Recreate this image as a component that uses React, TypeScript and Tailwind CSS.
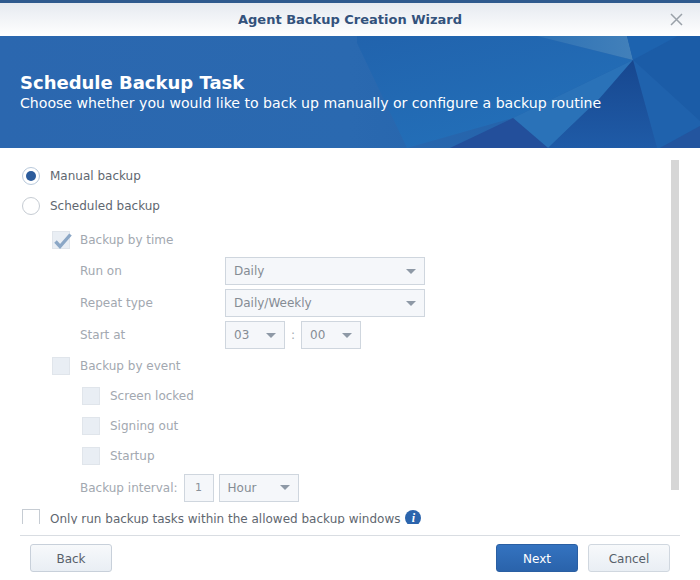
import React from "react";

const F = { fontFamily: '"DejaVu Sans", Verdana, sans-serif' };

function Arrow() {
  return <span className="w-0 h-0 border-x-[5px] border-x-transparent border-t-[5px] border-t-[#8e99a6]" />;
}

function Select({ value, w }: { value: string; w: string }) {
  return (
    <div className={`${w} h-[28px] border border-[#cfd6de] bg-[#f5f7fa] flex items-center justify-between pl-[8px] pr-[8px] text-[12px] text-[#858c94]`}>
      <span>{value}</span>
      <Arrow />
    </div>
  );
}

function Box({ checked }: { checked?: boolean }) {
  return (
    <span className="relative w-[18px] h-[18px] shrink-0 bg-[#e9eef4] border border-[#e0e5eb] block">
      {checked && (
        <svg className="absolute left-0 top-0 overflow-visible" width="18" height="18" viewBox="0 0 18 18">
          <path d="M2.5 9.5 L7 14.5 L17.5 2.5" fill="none" stroke="#8ba7c6" strokeWidth="3.4" />
        </svg>
      )}
    </span>
  );
}

function CheckRow({ label, indent, checked }: { label: string; indent: string; checked?: boolean }) {
  return (
    <div className={`h-[30px] flex items-center gap-[10px] ${indent} text-[12px] text-[#a2a8b0]`}>
      <Box checked={checked} />
      <span>{label}</span>
    </div>
  );
}

function Radio({ on, label }: { on?: boolean; label: string }) {
  return (
    <div className="h-[30px] flex items-center gap-[10px] pl-[2px] text-[12px] text-[#5f6770]">
      <span className={`w-[18px] h-[18px] rounded-full border flex items-center justify-center bg-white ${on ? "border-[#b9c9db]" : "border-[#c6ccd3]"}`}>
        {on && <span className="w-[10px] h-[10px] rounded-full bg-[#2c5c9c]" />}
      </span>
      <span>{label}</span>
    </div>
  );
}

function FieldRow({ label, children }: { label: string; children: React.ReactNode }) {
  return (
    <div className="h-[32px] flex items-center pl-[60px] text-[12px] text-[#a2a8b0]">
      <span className="w-[145px]">{label}</span>
      {children}
    </div>
  );
}

function Banner() {
  return (
    <div className="relative h-[112px] bg-[#2b67af] text-white overflow-hidden">
      <svg className="absolute inset-0" width="700" height="112" viewBox="0 0 700 112">
        <defs>
          <linearGradient id="g" x1="0" y1="0" x2="1" y2="0">
            <stop offset="0" stopColor="#2b67af" />
            <stop offset="0.5" stopColor="#2a69b0" />
            <stop offset="1" stopColor="#1f5da6" />
          </linearGradient>
          <linearGradient id="d" x1="0" y1="0" x2="0" y2="1">
            <stop offset="0" stopColor="#17478f" />
            <stop offset="1" stopColor="#1f5ba7" />
          </linearGradient>
          <linearGradient id="m" x1="0" y1="0" x2="0.6" y2="1">
            <stop offset="0" stopColor="#2163ad" />
            <stop offset="1" stopColor="#2370b9" />
          </linearGradient>
          <linearGradient id="l" x1="0" y1="0" x2="1" y2="0">
            <stop offset="0" stopColor="#2e72b5" />
            <stop offset="1" stopColor="#4280ba" />
          </linearGradient>
        </defs>
        <rect width="700" height="112" fill="url(#g)" />
        <polygon points="357,7 357,0 537,0 633,24 513,82 407,112" fill="url(#m)" />
        <polygon points="537,0 627,0 633,24" fill="url(#l)" />
        <polygon points="627,0 678,0 633,24" fill="#1d63af" />
        <polygon points="633,24 678,0 700,0 700,85" fill="#1b5ca7" />
        <polygon points="633,24 700,85 700,90 660,112 657,112" fill="#1f62ad" />
        <polygon points="513,82 633,24 600,62 548,112" fill="#2a72b8" />
        <polygon points="633,24 600,62 548,112 657,112" fill="url(#d)" />
        <polygon points="513,82 548,112 450,112" fill="#234f9b" />
        <polygon points="700,90 700,112 660,112" fill="#23559f" />
      </svg>
      <div className="relative pt-[36px] pl-[20px]">
        <div className="text-[18px] font-bold leading-[22px]">Schedule Backup Task</div>
        <div className="text-[14.1px] leading-[19px]">Choose whether you would like to back up manually or configure a backup routine</div>
      </div>
    </div>
  );
}

export default function App() {
  return (
    <div style={F} className="w-[700px] h-[580px] bg-white flex flex-col overflow-hidden">
      <div className="h-[3px] bg-[#2f5a8e]" />
      <div className="relative h-[33px] flex items-center justify-center bg-gradient-to-b from-[#e6eaf0] to-white text-[13px] font-bold text-[#33527c]">
        <span>Agent Backup Creation Wizard</span>
        <svg className="absolute right-[17px] top-[10px]" width="13" height="13" viewBox="0 0 13 13">
          <path d="M1 1 L12 12 M12 1 L1 12" stroke="#9aa1a9" strokeWidth="1.5" />
        </svg>
      </div>
      <Banner />
      <div className="h-[12px]" />
      <div className="h-[364px] flex pl-[20px] overflow-hidden">
        <div className="flex-1 overflow-hidden pt-[1px]">
          <Radio on label="Manual backup" />
          <Radio label="Scheduled backup" />
          <div className="h-[4px]" />
          <CheckRow label="Backup by time" indent="pl-[32px]" checked />
          <FieldRow label="Run on"><Select value="Daily" w="w-[200px]" /></FieldRow>
          <FieldRow label="Repeat type"><Select value="Daily/Weekly" w="w-[200px]" /></FieldRow>
          <FieldRow label="Start at">
            <Select value="03" w="w-[60px]" />
            <span className="w-[16px] text-center">:</span>
            <Select value="00" w="w-[60px]" />
          </FieldRow>
          <CheckRow label="Backup by event" indent="pl-[32px]" />
          <CheckRow label="Screen locked" indent="pl-[62px]" />
          <CheckRow label="Signing out" indent="pl-[62px]" />
          <CheckRow label="Startup" indent="pl-[62px]" />
          <div className="h-[33px] flex items-center pl-[60px] text-[12px] text-[#a2a8b0]">
            <span className="mr-[6px]">Backup interval:</span>
            <div className="w-[30px] h-[28px] border border-[#cfd6de] bg-[#f5f7fa] flex items-center justify-center pt-[2px] text-[11px] text-[#8a929b] mr-[5px]">1</div>
            <Select value="Hour" w="w-[80px]" />
          </div>
          <div className="h-[30px] flex items-center gap-[10px] pl-[2px] text-[12px] text-[#5f6770]">
            <span className="w-[18px] h-[18px] mb-[2px] border border-[#c6ccd3] bg-white block shrink-0" />
            <span>Only run backup tasks within the allowed backup windows</span>
            <span className="-ml-[5px] -mt-[3px] w-[16px] h-[16px] rounded-full bg-[#2c65ad] text-white text-[12px] font-bold italic flex items-center justify-center" style={{ fontFamily: '"Liberation Serif", serif' }}>i</span>
          </div>
        </div>
        <div className="w-[8px] h-[330px] bg-[#d6d6d6] mr-[21px] ml-[2px]" />
      </div>
      <div className="mx-[20px] mt-[11px] h-[1px] bg-[#d9dde2]" />
      <div className="flex items-center px-[30px] pt-[8px] text-[12px]">
        <button className="w-[82px] h-[28px] pt-[1px] rounded-[3px] border border-[#c8d0da] bg-gradient-to-b from-[#f7f9fb] to-[#e9eef4] text-[#57606a]">Back</button>
        <div className="flex-1" />
        <button className="w-[82px] h-[28px] pt-[1px] rounded-[3px] border border-[#2a5fa3] bg-gradient-to-b from-[#3473c0] to-[#2a63ab] text-white">Next</button>
        <button className="w-[82px] h-[28px] pt-[1px] ml-[10px] rounded-[3px] border border-[#d0d7df] bg-gradient-to-b from-[#f7f9fb] to-[#e9eef4] text-[#57606a]">Cancel</button>
      </div>
    </div>
  );
}
